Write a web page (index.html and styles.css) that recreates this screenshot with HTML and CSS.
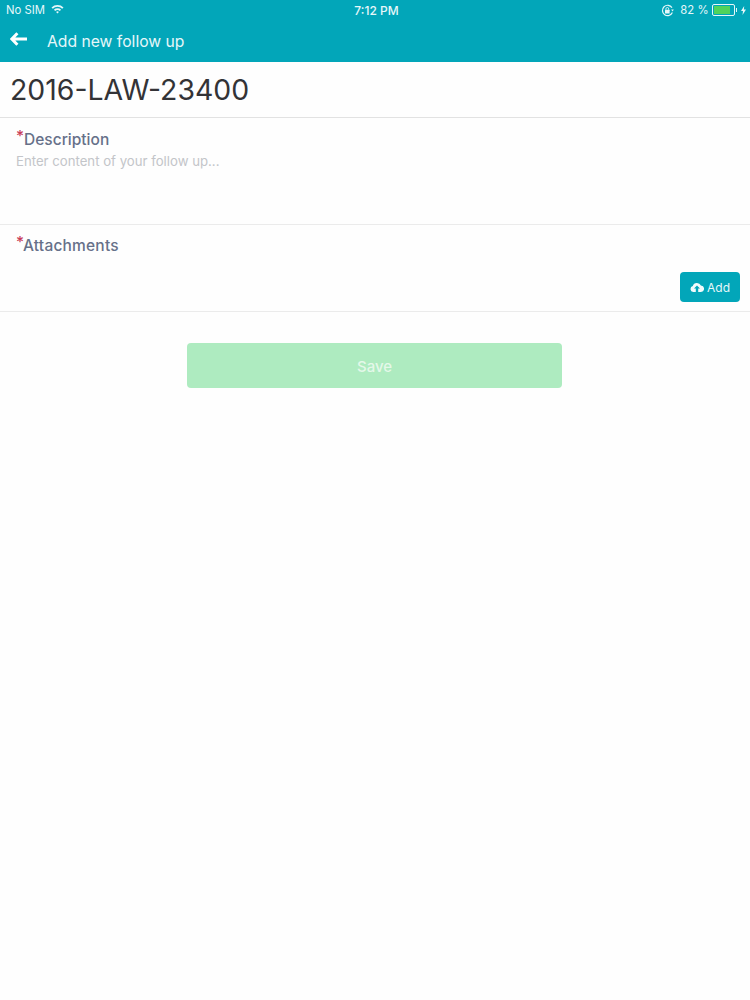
FILE: index.html
```html
<!DOCTYPE html>
<html>
<head>
  <title>Add new follow up</title>
  <link rel="stylesheet" href="styles.css">
</head>
<body>
  <header class="app-header">
    <div class="status-bar">
      <div class="status-left">
        <span>No SIM</span>
        <svg class="wifi-icon" width="13" height="10" viewBox="0 0 13 10">
          <path d="M0.5 3.4 A8.5 8.5 0 0 1 12.5 3.4 L11.2 4.8 A6.6 6.6 0 0 0 1.8 4.8 Z" fill="#e6f7f9"/>
          <path d="M2.9 5.7 A5.1 5.1 0 0 1 10.1 5.7 L8.8 7 A3.3 3.3 0 0 0 4.2 7 Z" fill="#e6f7f9"/>
          <path d="M5.1 7.9 A2 2 0 0 1 7.9 7.9 L6.5 9.5 Z" fill="#e6f7f9"/>
        </svg>
      </div>
      <div class="status-time">7:12 PM</div>
      <div class="status-right">
        <svg class="lock-icon" width="13" height="13" viewBox="0 0 13 13">
          <path d="M11 3.6 A5.2 5.2 0 1 0 11.4 8.6" fill="none" stroke="#e6f7f9" stroke-width="1.2"/>
          <path d="M10.2 5.6 L12.8 5.6 L11.5 7.4 Z" fill="#e6f7f9"/>
          <rect x="4" y="5.8" width="4.6" height="3.6" rx="0.5" fill="#e6f7f9"/>
          <path d="M4.9 5.8 V4.9 A1.4 1.4 0 0 1 7.7 4.9 V5.8" fill="none" stroke="#e6f7f9" stroke-width="0.9"/>
        </svg>
        <span class="battery-pct">82 %</span>
        <div class="battery"><div class="battery-fill"></div></div>
        <div class="battery-tip"></div>
        <svg class="bolt-icon" width="5" height="9" viewBox="0 0 5 9">
          <path d="M3.2 0 L0 5 H2 L1.5 9 L5 3.6 H2.9 Z" fill="#e6f7f9"/>
        </svg>
      </div>
    </div>
    <div class="nav-bar">
      <svg class="back-icon" width="18" height="14" viewBox="0 0 18 14">
        <path d="M7.4 1.2 L1.8 7 L7.4 12.8 M2.6 7 H17" fill="none" stroke="#fff" stroke-width="3"/>
      </svg>
      <span class="nav-title">Add new follow up</span>
    </div>
  </header>

  <div class="case-number">2016-LAW-23400</div>

  <section class="field description-field">
    <div class="field-label"><span class="required">*</span>Description</div>
    <div class="placeholder">Enter content of your follow up...</div>
  </section>

  <section class="field attachments-field">
    <div class="field-label"><span class="required">*</span>Attachments</div>
    <div class="add-row">
      <button class="add-btn">
        <svg width="14" height="10" viewBox="0 0 14 10">
          <path d="M3.2 10 A3 3 0 0 1 2.8 4.1 A4.3 4.3 0 0 1 10.9 3.6 A3.2 3.2 0 0 1 10.8 10 H8.2 V6.6 H10 L7 3.4 L4 6.6 H5.8 V10 Z" fill="#f2fbfc"/>
        </svg>
        Add
      </button>
    </div>
  </section>

  <div class="save-wrap">
    <button class="save-btn">Save</button>
  </div>
</body>
</html>
```

FILE: styles.css
```css
body {
  font-family: Inter, Roboto, sans-serif;
  margin: 0;
  background-color: #fefefe;
}

.app-header {
  height: 62px;
  background-color: #02a6b9;
  color: #e6f7f9;
}

.status-bar {
  display: grid;
  grid-template-columns: 1fr auto 1fr;
  align-items: center;
  height: 20px;
  padding: 0 4px 0 6px;
  font-size: 11.3px;
}

.status-left {
  display: flex;
  align-items: center;
  gap: 6px;
}

.wifi-icon {
  margin-top: -2px;
}

.status-time {
  margin-left: 1px;
  font-size: 12px;
  font-weight: 500;
}

.status-right {
  display: flex;
  align-items: center;
  justify-content: flex-end;
}

.battery-pct {
  margin: 0 3px 0 6px;
}

.battery {
  width: 19px;
  height: 8px;
  border: 1px solid #e6f7f9;
  border-radius: 2px;
  padding: 1px;
}

.battery-fill {
  width: 16px;
  height: 8px;
  background-color: #4fd35c;
}

.battery-tip {
  width: 1.5px;
  height: 4px;
  margin: 0 4px 0 1px;
  background-color: #e6f7f9;
}

.nav-bar {
  display: flex;
  align-items: center;
  height: 42px;
  padding-left: 10px;
}

.back-icon {
  margin-top: -4px;
}

.nav-title {
  margin-left: 19px;
  font-size: 15.7px;
}

.case-number {
  height: 55px;
  line-height: 55px;
  padding-left: 10px;
  font-size: 28.4px;
  color: #333336;
  border-bottom: 1px solid #e2e2e2;
}

.field {
  padding: 11px 16px 0;
  border-bottom: 1px solid #ebebeb;
}

.description-field {
  height: 94px;
  padding-top: 12px;
}

.attachments-field {
  height: 75px;
}

.field-label {
  font-size: 15.5px;
  font-weight: 500;
  line-height: 20px;
  color: #667089;
}

.attachments-field .field-label {
  letter-spacing: 0.2px;
}

.required {
  position: relative;
  top: -3px;
  color: #c9405a;
}

.placeholder {
  margin-top: 3px;
  font-size: 13.2px;
  color: #c3c5c9;
}

.add-row {
  display: flex;
  justify-content: flex-end;
  margin: 16px -6px 0 0;
}

.add-btn {
  display: flex;
  align-items: center;
  justify-content: center;
  gap: 3px;
  width: 60px;
  height: 30px;
  padding: 0;
  font: inherit;
  font-size: 12px;
  color: #e6f7f9;
  background-color: #02a6b9;
  border: none;
  border-radius: 4px;
}

.save-wrap {
  display: flex;
  justify-content: center;
  margin: 31px 1px 0 0;
}

.save-btn {
  width: 375px;
  height: 45px;
  padding: 2px 0 0;
  font: inherit;
  font-size: 15px;
  font-weight: 500;
  color: #e4f8e9;
  background-color: #aeebc0;
  border: none;
  border-radius: 4px;
}
```
